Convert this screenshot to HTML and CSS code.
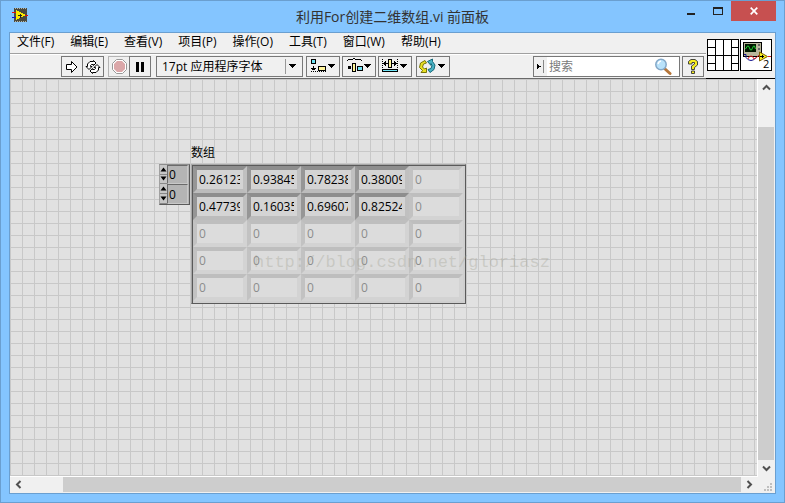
FILE: index.html
```
<!DOCTYPE html>
<html lang="zh-CN">
<head>
    <meta charset="UTF-8">
    <meta name="viewport" content="width=device-width, initial-scale=1.0">
    <title>利用For创建二维数组.vi 前面板</title>
    <link rel="stylesheet" href="styles.css">
</head>
<body>
    <div class="window">
        <!-- Title bar -->
        <header class="titlebar">
            <svg class="app-icon" width="17" height="16" viewBox="0 0 17 16" shape-rendering="crispEdges">
                <rect x="2" y="1" width="13" height="14" fill="#4a4a40"/>
                <path d="M3 1.500h12M3 14.500h12" stroke="#b8b8a8" stroke-dasharray="1 1"/>
                <path d="M4 3l10 5-10 5z" fill="#f8e800"/>
                <path d="M6 8.500h4M8 6.500v4" stroke="#222"/>
                <path d="M0 5.500h4M13 8.500h3" stroke="#e01010"/>
                <path d="M0 10.500h4" stroke="#1010d0"/>
            </svg>
            <h1 class="title">利用For创建二维数组.vi 前面板</h1>
            <div class="window-buttons">
                <button class="win-btn" aria-label="最小化">
                    <svg width="10" height="10" viewBox="0 0 10 10" shape-rendering="crispEdges"><path d="M1 7h8v2H1z" fill="#222"/></svg>
                </button>
                <button class="win-btn" aria-label="最大化">
                    <svg width="10" height="10" viewBox="0 0 10 10" shape-rendering="crispEdges"><path d="M0 1h10v8H0zM1 3v5h8V3z" fill="#222" fill-rule="evenodd"/></svg>
                </button>
                <button class="win-btn close" aria-label="关闭">
                    <svg width="8" height="8" viewBox="0 0 8 8"><path d="M.7.7l6.600 6.600M7.300.7L.7 7.300" stroke="#fff" stroke-width="1.700"/></svg>
                </button>
            </div>
        </header>

        <main class="app">
            <div class="header">
                <div class="bars">
                    <nav class="menu">
                        <button>文件(F)</button>
                        <button>编辑(E)</button>
                        <button>查看(V)</button>
                        <button>项目(P)</button>
                        <button>操作(O)</button>
                        <button>工具(T)</button>
                        <button>窗口(W)</button>
                        <button>帮助(H)</button>
                    </nav>

                    <!-- Toolbar -->
                    <div class="toolbar">
                        <div class="group">
                            <button class="tool" aria-label="运行">
                                <svg width="14" height="14" viewBox="0 0 14 14"><path d="M1.500 4.500h5V1.500L12 7l-5.500 5.500V9.500h-5z" fill="#fff" stroke="#000"/></svg>
                            </button>
                            <button class="tool" aria-label="连续运行">
                                <svg width="16" height="14" viewBox="0 0 16 14">
                                    <path d="M1 6.500h1.500V4l2.500-2.500h3.500V.5L11 3 8.500 5.500V4.500H6.500L5.500 5.500v1H7L4 9.500z" fill="#fff" stroke="#000"/>
                                    <path d="M15 7.500h-1.500V10L11 12.500H7.500v1L5 11l2.500-2.500v1h2l1-1v-1H9L12 4.500z" fill="#fff" stroke="#000"/>
                                </svg>
                            </button>
                        </div>
                        <div class="group">
                            <button class="tool dim" aria-label="中止执行" disabled>
                                <svg width="15" height="15" viewBox="0 0 15 15"><path d="M4.500.5h6l4 4v6l-4 4h-6l-4-4v-6z" fill="#fff" stroke="#999"/><path d="M5 2h5l3 3v5l-3 3H5l-3-3V5z" fill="#dba7a9"/></svg>
                            </button>
                            <button class="tool" aria-label="暂停">
                                <svg width="10" height="10" viewBox="0 0 10 10" shape-rendering="crispEdges"><path d="M1 0h3v10H1zM6 0h3v10H6z"/></svg>
                            </button>
                        </div>
                        <div class="font-box">
                            <select aria-label="字体">
                                <option>17pt 应用程序字体</option>
                            </select>
                            <svg class="font-arrow" width="14" height="15" viewBox="0 0 14 15" shape-rendering="crispEdges"><path d="M.5 0v15" stroke="#999"/><path d="M4 5h7L7.500 9z"/></svg>
                        </div>
                        <div class="menus">
                            <button class="drop" aria-label="对齐对象">
                                <svg width="30" height="17" viewBox="0 0 30 17" shape-rendering="crispEdges">
                                    <rect x="3.500" y="1.500" width="4" height="4" fill="#6fe4f5" stroke="#000"/>
                                    <rect x="10.500" y="8.500" width="7" height="4" fill="#fff59c" stroke="#000"/>
                                    <path d="M5.500 8v4M3 10.500h5M4 11.500h3" stroke="#000"/>
                                    <path d="M3 13.500h15" stroke="#000" stroke-dasharray="1 1"/>
                                    <path d="M20 6h7l-3.500 4z"/>
                                </svg>
                            </button>
                            <button class="drop" aria-label="分布对象">
                                <svg width="30" height="17" viewBox="0 0 30 17" shape-rendering="crispEdges">
                                    <path d="M3 2.500h1M4 1.500h5M9 .5h2M11 1.500h6M17 2.500h1" stroke="#000"/>
                                    <rect x="4" y="8" width="3" height="3"/>
                                    <rect x="8.500" y="5.500" width="3" height="8" fill="#fff59c" stroke="#000"/>
                                    <rect x="13.500" y="8.500" width="5" height="4" fill="#6fe4f5" stroke="#000"/>
                                    <path d="M20 6h7l-3.500 4z"/>
                                </svg>
                            </button>
                            <button class="drop" aria-label="调整对象大小">
                                <svg width="30" height="17" viewBox="0 0 30 17" shape-rendering="crispEdges">
                                    <path d="M2.500 1v13M17.500 1v13" stroke="#000" stroke-dasharray="1 1"/>
                                    <path d="M3 5.500h5M12 5.500h5" stroke="#000"/>
                                    <path d="M3 5.500l3-3v6zM17 5.500l-3-3v6z"/>
                                    <rect x="8.500" y="1.500" width="3" height="8" fill="#fff59c" stroke="#000"/>
                                    <rect x="2.500" y="11.500" width="15" height="2" fill="#6fe4f5" stroke="#000"/>
                                    <path d="M20 6h7l-3.500 4z"/>
                                </svg>
                            </button>
                        </div>
                        <button class="drop" aria-label="重新排序">
                            <svg width="30" height="17" viewBox="0 0 30 17">
                                <path d="M7 2.500L2.500 5 1.500 9.500 4.500 12.500 3 14.500h5.500V10L6.500 11 4.500 9 5.500 6 8.500 5z" fill="#e9e022" stroke="#77760a"/>
                                <path d="M12 14.500l4-3 1-4.500-2.500-3.500V1L9.500 3.500 13 7.500V5.500l1 2-1 3-3 1z" fill="#4ab4c6" stroke="#17697a"/>
                                <path d="M20 6h7l-3.500 4z" shape-rendering="crispEdges"/>
                            </svg>
                        </button>
                        <div class="search">
                            <button class="search-mode" aria-label="搜索选项">
                                <svg width="11" height="15" viewBox="0 0 11 15" shape-rendering="crispEdges"><path d="M3 5h1v1h1v1h2v1H5v1H4v1H3z" fill="#000"/><path d="M9.500 1v13" stroke="#888"/></svg>
                            </button>
                            <input type="text" placeholder="搜索" aria-label="搜索">
                            <button class="search-go" aria-label="开始搜索">
                                <svg width="18" height="18" viewBox="0 0 18 18">
                                    <path d="M10.500 10.500l5.500 5" stroke="#b5763a" stroke-width="3" stroke-linecap="round"/>
                                    <circle cx="7" cy="6.500" r="5.200" fill="#b9e2fa" stroke="#84a8c8" stroke-width="1.500"/>
                                    <path d="M4 6q.5-2.500 3-3" stroke="#fff" stroke-width="1.500" fill="none"/>
                                </svg>
                            </button>
                        </div>
                        <button class="tool help" aria-label="帮助">
                            <svg width="12" height="17" viewBox="0 0 12 17"><path d="M1.500 6V3.500L4 1.500h4l2.500 2V7L7.500 9.500v2h-3V8l3-2V4.500H5V6zM4.500 13h3v2.500h-3z" fill="#f7ee1e" stroke="#333" stroke-width=".9"/></svg>
                        </button>
                    </div>
                </div>

                <!-- Connector pane and VI icon -->
                <div class="pane">
                    <svg width="32" height="32" viewBox="0 0 32 32" shape-rendering="crispEdges">
                        <rect x=".5" y=".5" width="31" height="31" fill="#fff" stroke="#000"/>
                        <path d="M8.500 0v32M16.500 0v32M24.500 0v32M0 16.500h32M0 8.500h8M0 24.500h8M24 8.500h8M24 24.500h8" stroke="#000"/>
                    </svg>
                    <svg width="32" height="32" viewBox="0 0 32 32">
                        <g shape-rendering="crispEdges">
                            <rect x=".5" y=".5" width="31" height="31" fill="#fff" stroke="#000"/>
                            <rect x="3.500" y="3.500" width="18" height="14" fill="#b9b79c" stroke="#000"/>
                            <rect x="5" y="5" width="11" height="8" fill="#001800"/>
                            <path d="M18 5h2v2h-2zM18 9h2v2h-2z" fill="#666"/>
                        </g>
                        <path d="M5.500 10l2-3h1l2 4h1l2-4h1l1 3" fill="none" stroke="#20d030"/>
                        <path d="M4 15.500h2v3q2 3 5 3t5-3" fill="none" stroke="#10108c"/>
                        <path d="M8 20q1-3 3-3t3 3q3-1 5-4" fill="none" stroke="#e02020"/>
                        <path d="M19.500 13v9l8-4.500z" fill="#f8ee20" stroke="#806000"/>
                        <path d="M20 17.500h4M22.500 16v3" stroke="#000" shape-rendering="crispEdges"/>
                        <path d="M28 17.500h3" stroke="#e02020"/>
                        <text class="vi-number" x="23" y="29">2</text>
                    </svg>
                </div>
            </div>

            <!-- Front panel -->
            <div class="workspace">
                <div class="panel">
                    <div class="array">
                        <div class="index">
                            <div class="index-row">
                                <div class="spin">
                                    <button aria-label="行增加"><svg width="7" height="5" viewBox="0 0 7 5"><path d="M.5 4.500h6L3.500.5z"/></svg></button>
                                    <button aria-label="行减少"><svg width="7" height="5" viewBox="0 0 7 5"><path d="M.5.5h6l-3 4z"/></svg></button>
                                </div>
                                <input type="text" value="0" aria-label="行索引">
                            </div>
                            <div class="index-row">
                                <div class="spin">
                                    <button aria-label="列增加"><svg width="7" height="5" viewBox="0 0 7 5"><path d="M.5 4.500h6L3.500.5z"/></svg></button>
                                    <button aria-label="列减少"><svg width="7" height="5" viewBox="0 0 7 5"><path d="M.5.5h6l-3 4z"/></svg></button>
                                </div>
                                <input type="text" value="0" aria-label="列索引">
                            </div>
                        </div>
                        <table class="values">
                            <caption>数组</caption>
                            <tr>
                                <td><div class="cell">0.26123</div></td>
                                <td><div class="cell">0.93845</div></td>
                                <td><div class="cell">0.78238</div></td>
                                <td><div class="cell">0.38009</div></td>
                                <td><div class="cell empty">0</div></td>
                            </tr>
                            <tr>
                                <td><div class="cell">0.47739</div></td>
                                <td><div class="cell">0.16035</div></td>
                                <td><div class="cell">0.69607</div></td>
                                <td><div class="cell">0.82524</div></td>
                                <td><div class="cell empty">0</div></td>
                            </tr>
                            <tr>
                                <td><div class="cell empty">0</div></td>
                                <td><div class="cell empty">0</div></td>
                                <td><div class="cell empty">0</div></td>
                                <td><div class="cell empty">0</div></td>
                                <td><div class="cell empty">0</div></td>
                            </tr>
                            <tr>
                                <td><div class="cell empty">0</div></td>
                                <td><div class="cell empty">0</div></td>
                                <td><div class="cell empty">0</div></td>
                                <td><div class="cell empty">0</div></td>
                                <td><div class="cell empty">0</div></td>
                            </tr>
                            <tr>
                                <td><div class="cell empty">0</div></td>
                                <td><div class="cell empty">0</div></td>
                                <td><div class="cell empty">0</div></td>
                                <td><div class="cell empty">0</div></td>
                                <td><div class="cell empty">0</div></td>
                            </tr>
                        </table>
                    </div>
                    <span class="watermark">http://blog.csdn.net/gloriasz</span>
                </div>

                <div class="scroll vertical">
                    <button aria-label="向上滚动"><svg width="9" height="7" viewBox="0 0 9 7"><path d="M1 5.500L4.500 2 8 5.500" fill="none" stroke="#505050" stroke-width="2"/></svg></button>
                    <div class="track"><div class="thumb"></div></div>
                    <button aria-label="向下滚动"><svg width="9" height="7" viewBox="0 0 9 7"><path d="M1 1.500L4.500 5 8 1.500" fill="none" stroke="#505050" stroke-width="2"/></svg></button>
                </div>
                <div class="scroll horizontal">
                    <button aria-label="向左滚动"><svg width="7" height="9" viewBox="0 0 7 9"><path d="M5.500 1L2 4.500 5.500 8" fill="none" stroke="#505050" stroke-width="2"/></svg></button>
                    <div class="track"><div class="thumb"></div></div>
                    <button aria-label="向右滚动"><svg width="7" height="9" viewBox="0 0 7 9"><path d="M1.500 1L5 4.500 1.500 8" fill="none" stroke="#505050" stroke-width="2"/></svg></button>
                </div>
                <div class="grip">
                    <svg width="8" height="8" viewBox="0 0 8 8" shape-rendering="crispEdges"><path d="M6 0h2v2H6zM3 3h2v2H3zM6 3h2v2H6zM0 6h2v2H0zM3 6h2v2H3zM6 6h2v2H6z" fill="#bfbfbf"/></svg>
                </div>
            </div>
        </main>
    </div>
</body>
</html>
```
FILE: styles.css
```
:root {
    --frame: #84c5ff;
    --frame-edge: #6a9fd0;
    --bar: #f0f0f0;
    --line: #787878;
    --thumb: #cdcdcd;
}

* {
    box-sizing: border-box;
}

body {
    margin: 0;
    height: 100vh;
    overflow: hidden;
    font-family: "Open Sans", "Noto Sans CJK SC", sans-serif;
    font-size: 12px;
    color: #000;
}

button,
input,
select {
    margin: 0;
    padding: 0;
    border: none;
    border-radius: 0;
    background: none;
    font: inherit;
    color: inherit;
}

svg {
    display: block;
    flex-shrink: 0;
}

.window {
    display: flex;
    flex-direction: column;
    height: 100%;
    padding: 0 8px 8px;
    background: var(--frame);
    border: 1px solid var(--frame-edge);
}

/* Title bar */
.titlebar {
    display: grid;
    grid-template-columns: 1fr auto 1fr;
    height: 31px;
    flex-shrink: 0;
}

.app-icon {
    margin: 6px 0 0 3px;
}

.title {
    margin: 0;
    font-size: 14px;
    font-weight: normal;
    line-height: 31px;
    color: #333;
}

.window-buttons {
    display: flex;
    justify-content: flex-end;
    align-items: flex-start;
}

.win-btn {
    display: flex;
    align-items: center;
    justify-content: center;
    width: 27px;
    height: 20px;
}

.win-btn.close {
    width: 45px;
    background: #c75050;
}

/* Menu and toolbar */
.app {
    display: flex;
    flex-direction: column;
    flex: 1;
    min-height: 0;
    background: var(--bar);
    border: 1px solid var(--frame-edge);
}

.header {
    display: flex;
}

.bars {
    flex: 1;
    min-width: 0;
}

.menu {
    display: flex;
    gap: 16px;
    height: 21px;
    padding-left: 7px;
    border-bottom: 1px solid #a0a0a0;
}

.menu button {
    line-height: 18px;
    height: 18px;
    white-space: nowrap;
}

.toolbar {
    display: flex;
    align-items: center;
    height: 25px;
    padding: 0 2px 0 51px;
    border-top: 1px solid #fff;
    border-bottom: 1px solid #696969;
}

.group {
    display: flex;
    margin-right: 4px;
}

.group + .group {
    margin-right: 5px;
}

.tool,
.drop {
    display: flex;
    align-items: center;
    justify-content: center;
    width: 22px;
    height: 21px;
    border: 1px solid var(--line);
}

.tool + .tool {
    margin-left: -1px;
}

.tool.dim {
    border-color: #b4b4b4;
}

.drop {
    width: 34px;
}

.menus {
    display: flex;
    gap: 2px;
    margin: 0 4px 0 3px;
}

.font-box {
    position: relative;
}

.font-box select {
    appearance: none;
    width: 147px;
    height: 21px;
    padding-left: 5px;
    border: 1px solid var(--line);
}

.font-arrow {
    position: absolute;
    top: 3px;
    right: 4px;
    pointer-events: none;
}

.search {
    display: flex;
    align-items: center;
    width: 147px;
    height: 21px;
    margin-left: auto;
    margin-right: 2px;
    border: 1px solid var(--line);
    background: #fff;
}

.search-mode {
    align-self: stretch;
    display: flex;
    align-items: center;
    width: 13px;
    background: var(--bar);
}

.search input {
    flex: 1;
    min-width: 0;
    height: 19px;
    padding-left: 2px;
}

.search input::placeholder {
    color: #7a7a7a;
}

.search-go {
    margin-right: 7px;
}

.pane {
    display: flex;
    gap: 1px;
    padding: 6px 3px 0 1px;
    border-bottom: 1px solid #000;
}

.vi-number {
    font-size: 11px;
}

/* Front panel */
.workspace {
    display: grid;
    grid-template-columns: 1fr 17px;
    grid-template-rows: 1fr 16px;
    flex: 1;
    min-height: 0;
}

.panel {
    position: relative;
    overflow: hidden;
    border-right: 1px solid #fff;
    border-bottom: 1px solid #fff;
    background-color: #e1e1e1;
    background-image:
        linear-gradient(#c8c8c8 1px, transparent 1px),
        linear-gradient(90deg, #c8c8c8 1px, transparent 1px);
    background-size: 12px 12px;
}

/* Objects are placed freely on the panel */
.array {
    position: absolute;
    top: 63px;
    left: 149px;
    display: flex;
}

.index {
    align-self: flex-start;
    width: 31px;
    margin: 22px 1px 0 0;
    background: #b4b4b4;
    border: 1px solid;
    border-color: #8c8c8c #5a5a5a #5a5a5a #a0a0a0;
    padding-right: 1px;
}

.index-row {
    display: flex;
    height: 19px;
}

.index-row + .index-row {
    height: 20px;
}

.spin {
    display: flex;
    flex-direction: column;
    width: 7px;
}

.spin button {
    display: flex;
    align-items: center;
    flex: 1;
    min-height: 0;
    background: #c6c6c6;
    border-bottom: 1px solid #888;
}

.index-row input {
    flex: 1;
    min-width: 0;
    padding-left: 1px;
    border-top: 1px solid #6a6a6a;
    border-left: 1px solid #6a6a6a;
    border-right: 1px solid #c8c8c8;
    border-bottom: 1px solid #c8c8c8;
}

.values {
    table-layout: fixed;
    width: 275px;
    border-collapse: separate;
    border-spacing: 0;
    padding: 1px 2px 2px 1px;
    background: #cfcfcf;
    border: 1px solid;
    border-color: #a8a8a8 #5a5a5a #5a5a5a #a8a8a8;
    box-shadow: inset 1px 1px #5a5a5a;
}

.values caption {
    height: 22px;
    line-height: 21px;
    text-align: left;
}

.values td {
    padding: 0;
}

/* Long numbers are cut at the content edge, inside the bevel */
.cell {
    height: 27px;
    padding: 0 3px 0 2px;
    overflow: clip;
    overflow-clip-margin: content-box;
    line-height: 19px;
    background: #d4d4d4;
    border: 4px solid;
    border-color: #8e8e8e #c0c0c0 #bcbcbc #969696;
}

.cell.empty {
    color: #8c8c8c;
    background: #dcdcdc;
    border-color: #bebebe #d3d3d3 #d3d3d3 #c2c2c2;
}

.watermark {
    position: absolute;
    top: 173px;
    left: 244px;
    font-family: "Liberation Mono", monospace;
    font-size: 17px;
    line-height: 22px;
    color: rgba(160, 160, 145, 0.35);
    pointer-events: none;
}

/* Scrollbars */
.scroll {
    display: flex;
}

.scroll button {
    display: flex;
    align-items: center;
    justify-content: center;
    width: 17px;
    height: 17px;
}

.scroll .track {
    flex: 1;
    display: flex;
}

.scroll .thumb {
    flex: 1;
    background: var(--thumb);
}

.vertical {
    flex-direction: column;
    padding-right: 1px;
}

.vertical button {
    width: 16px;
}

.vertical .track {
    padding-top: 31px;
}

.horizontal {
    padding-bottom: 1px;
}

.horizontal button {
    height: 15px;
}

.horizontal .track {
    padding-left: 36px;
}

.grip {
    display: flex;
    align-items: flex-end;
    justify-content: flex-end;
    padding: 0 3px 2px 0;
}
```
